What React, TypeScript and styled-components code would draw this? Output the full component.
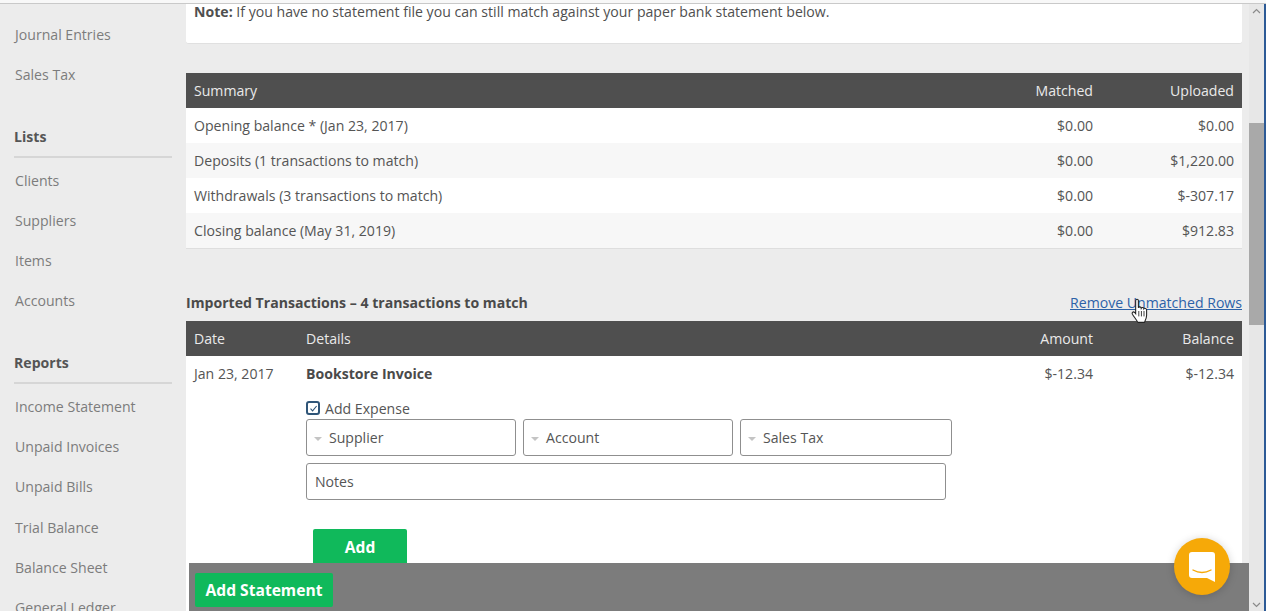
import React from "react";
import styled, { createGlobalStyle } from "styled-components";

const GlobalStyle = createGlobalStyle`
    html, body {
        margin: 0;
        padding: 0;
        background: #ededed;
        overflow: hidden;
    }
    * {
        box-sizing: border-box;
    }
`;

const Page = styled.div`
    position: relative;
    width: 1266px;
    height: 611px;
    overflow: hidden;
    display: flex;
    flex-direction: column;
    background: #ececec;
    font-family: "Open Sans", "Liberation Sans", sans-serif;
    font-size: 14.1px;
    color: #555;
`;

const TopEdge = styled.div`
    height: 4px;
    flex: none;
    background: #f8f8f8;
    border-bottom: 1px solid #c9c9c9;
`;

const Body = styled.div`
    flex: 1;
    display: flex;
    min-height: 0;
    border-right: 2px solid #2c5a96;
`;

const Sidebar = styled.nav`
    width: 186px;
    flex: none;
    overflow: hidden;
    padding: 11px 14px 0 15px;
    display: flex;
    flex-direction: column;
`;

const NavItem = styled.div`
    height: 40.3px;
    flex: none;
    line-height: 40.3px;
    color: #7c7c7c;
    white-space: nowrap;
`;

const NavHeading = styled.div`
    flex: none;
    margin: 21px 0 3px -1px;
    height: 41px;
    line-height: 40px;
    font-weight: 700;
    color: #555;
    border-bottom: 2px solid #d6d6d6;
`;

const Main = styled.main`
    flex: 1;
    min-width: 0;
    padding-right: 7px;
    overflow: hidden;
`;

const NoteCard = styled.div`
    height: 40px;
    padding: 0 8px;
    background: #fff;
    border-radius: 0 0 3px 3px;
    border-bottom: 1px solid #e0e0e0;
    line-height: 16px;
    white-space: nowrap;
    color: #4f4f4f;
`;

const Strong = styled.strong`
    font-weight: 700;
`;

const Table = styled.div<{ $top: number }>`
    margin-top: ${({ $top }) => $top}px;
    background: #fff;
`;

const SummaryTable = styled(Table)`
    border-bottom: 1px solid #dedede;
`;

const HeaderRow = styled.div`
    height: 35px;
    display: flex;
    align-items: center;
    padding: 0 8px;
    background: #4f4f4f;
    color: #eaeaea;
`;

const Row = styled.div<{ $alt?: boolean }>`
    height: 35px;
    display: flex;
    align-items: center;
    padding: 0 8px;
    background: ${({ $alt }) => ($alt ? "#f7f7f7" : "#fff")};
`;

const Grow = styled.div`
    flex: 1;
`;

const NumCell = styled.div<{ $width: number }>`
    width: ${({ $width }) => $width}px;
    text-align: right;
    flex: none;
`;

const DateCell = styled.div`
    width: 112px;
    flex: none;
`;

const TitleBar = styled.div`
    margin-top: 39px;
    height: 28px;
    display: flex;
    align-items: center;
    justify-content: space-between;
`;

const SectionTitle = styled.div`
    font-weight: 700;
    color: #4a4a4a;
`;

const RemoveLink = styled.a`
    color: #2d62a8;
    text-decoration: underline;
`;

const Transaction = styled.div`
    background: #fff;
    height: 260px;
`;

const TxHead = styled.div`
    height: 35px;
    display: flex;
    align-items: center;
    padding: 0 8px;
`;

const TxName = styled.div`
    flex: 1;
    font-weight: 700;
    color: #4a4a4a;
`;

const ExpenseForm = styled.div`
    margin-left: 120px;
    padding-top: 7px;
`;

const CheckLine = styled.label`
    height: 20px;
    display: flex;
    align-items: center;
    gap: 5px;
`;

const CheckBox = styled.span`
    width: 14px;
    height: 14px;
    display: flex;
    align-items: center;
    justify-content: center;
    border: 2px solid #2f5578;
    border-radius: 3px;
`;

const SelectRow = styled.div`
    display: flex;
    gap: 7px;
    margin-top: 1px;
`;

const SelectBox = styled.div<{ $width: number }>`
    width: ${({ $width }) => $width}px;
    height: 37px;
    display: flex;
    align-items: center;
    padding-left: 7px;
    border: 1px solid #8f8f8f;
    border-radius: 3px;
    background: #fff;
`;

const Caret = styled.span`
    width: 0;
    height: 0;
    margin: 2px 7px 0 0;
    border-left: 4px solid transparent;
    border-right: 4px solid transparent;
    border-top: 4px solid #c4c4c4;
`;

const NotesBox = styled.div`
    width: 640px;
    height: 37px;
    margin-top: 7px;
    padding-left: 8px;
    display: flex;
    align-items: center;
    border: 1px solid #8f8f8f;
    border-radius: 3px;
`;

const GreenButton = styled.button`
    border: 0;
    border-radius: 2px;
    background: #10b95b;
    color: #fff;
    font-family: inherit;
    font-weight: 700;
    font-size: 15.6px;
`;

const AddButton = styled(GreenButton)`
    display: block;
    width: 94px;
    height: 36px;
    margin: 29px 0 0 7px;
`;

const ScrollTrack = styled.div`
    width: 15px;
    flex: none;
    position: relative;
    background: #e7e7e7;
`;

const ScrollThumb = styled.div`
    position: absolute;
    top: 119px;
    left: 0;
    width: 100%;
    height: 202px;
    background: #a9a9a9;
`;

const ScrollArrow = styled.svg<{ $end: "top" | "bottom" }>`
    position: absolute;
    left: 3px;
    ${({ $end }) => ($end === "top" ? "top: 4px;" : "bottom: 3px;")}
`;

const BottomBar = styled.div`
    position: absolute;
    left: 189px;
    right: 17px;
    bottom: 0;
    height: 48px;
    padding: 10px 0 0 6px;
    background: #7c7c7c;
`;

const StatementButton = styled(GreenButton)`
    width: 138px;
    height: 34px;
`;

const ChatBubble = styled.div`
    position: absolute;
    left: 1174px;
    top: 538px;
    width: 56px;
    height: 57px;
    display: flex;
    align-items: center;
    justify-content: center;
    border-radius: 50%;
    background: #f6a908;
    box-shadow: 0 1px 8px rgba(0, 0, 0, 0.18);
`;

const CursorIcon = styled.svg`
    position: absolute;
    left: 1130px;
    top: 298px;
`;

const navTop = ["Journal Entries", "Sales Tax"];
const navLists = ["Clients", "Suppliers", "Items", "Accounts"];
const navReports = ["Income Statement", "Unpaid Invoices", "Unpaid Bills", "Trial Balance", "Balance Sheet", "General Ledger"];

const summary = [
    { label: "Opening balance * (Jan 23, 2017)", matched: "$0.00", uploaded: "$0.00" },
    { label: "Deposits (1 transactions to match)", matched: "$0.00", uploaded: "$1,220.00" },
    { label: "Withdrawals (3 transactions to match)", matched: "$0.00", uploaded: "$-307.17" },
    { label: "Closing balance (May 31, 2019)", matched: "$0.00", uploaded: "$912.83" },
];

export default function App() {
    return (
        <Page>
            <GlobalStyle />
            <TopEdge />
            <Body>
                <Sidebar>
                    {navTop.map((n) => <NavItem key={n}>{n}</NavItem>)}
                    <NavHeading>Lists</NavHeading>
                    {navLists.map((n) => <NavItem key={n}>{n}</NavItem>)}
                    <NavHeading>Reports</NavHeading>
                    {navReports.map((n) => <NavItem key={n}>{n}</NavItem>)}
                </Sidebar>
                <Main>
                    <NoteCard>
                        <Strong>Note:</Strong> If you have no statement file you can still match against your paper bank statement below.
                    </NoteCard>
                    <SummaryTable $top={29}>
                        <HeaderRow>
                            <Grow>Summary</Grow>
                            <NumCell $width={120}>Matched</NumCell>
                            <NumCell $width={141}>Uploaded</NumCell>
                        </HeaderRow>
                        {summary.map((s, i) => (
                            <Row key={s.label} $alt={i % 2 === 1}>
                                <Grow>{s.label}</Grow>
                                <NumCell $width={120}>{s.matched}</NumCell>
                                <NumCell $width={141}>{s.uploaded}</NumCell>
                            </Row>
                        ))}
                    </SummaryTable>
                    <TitleBar>
                        <SectionTitle>Imported Transactions – 4 transactions to match</SectionTitle>
                        <RemoveLink>Remove Unmatched Rows</RemoveLink>
                    </TitleBar>
                    <Table $top={5}>
                        <HeaderRow>
                            <DateCell>Date</DateCell>
                            <Grow>Details</Grow>
                            <NumCell $width={120}>Amount</NumCell>
                            <NumCell $width={141}>Balance</NumCell>
                        </HeaderRow>
                        <Transaction>
                            <TxHead>
                                <DateCell>Jan 23, 2017</DateCell>
                                <TxName>Bookstore Invoice</TxName>
                                <NumCell $width={120}>$-12.34</NumCell>
                                <NumCell $width={141}>$-12.34</NumCell>
                            </TxHead>
                            <ExpenseForm>
                                <CheckLine>
                                    <CheckBox>
                                        <svg width="9" height="9" viewBox="0 0 9 9" fill="none">
                                            <path d="M1.5 4.6 L3.6 6.8 L7.6 2" stroke="#2f5578" strokeWidth="1.1" />
                                        </svg>
                                    </CheckBox>
                                    Add Expense
                                </CheckLine>
                                <SelectRow>
                                    <SelectBox $width={210}><Caret />Supplier</SelectBox>
                                    <SelectBox $width={210}><Caret />Account</SelectBox>
                                    <SelectBox $width={212}><Caret />Sales Tax</SelectBox>
                                </SelectRow>
                                <NotesBox>Notes</NotesBox>
                                <AddButton>Add</AddButton>
                            </ExpenseForm>
                        </Transaction>
                    </Table>
                </Main>
                <ScrollTrack>
                    <ScrollThumb />
                    <ScrollArrow $end="top" width="9" height="6" viewBox="0 0 9 6" fill="none">
                        <path d="M1 5 L4.5 1.5 L8 5" stroke="#8a8a8a" strokeWidth="1.2" />
                    </ScrollArrow>
                    <ScrollArrow $end="bottom" width="9" height="6" viewBox="0 0 9 6" fill="none">
                        <path d="M1 1 L4.5 4.5 L8 1" stroke="#8a8a8a" strokeWidth="1.2" />
                    </ScrollArrow>
                </ScrollTrack>
            </Body>
            <BottomBar>
                <StatementButton>Add Statement</StatementButton>
            </BottomBar>
            <ChatBubble>
                <svg width="26" height="30" viewBox="0 0 26 30">
                    <path d="M3 0 H23 A3 3 0 0 1 26 3 V30 L18 26 H3 A3 3 0 0 1 0 23 V3 A3 3 0 0 1 3 0 Z" fill="#fff" />
                    <path d="M4 18 Q13 23 22 18" fill="none" stroke="#f6a908" strokeWidth="1.4" strokeLinecap="round" />
                </svg>
            </ChatBubble>
            <CursorIcon width="20" height="26" viewBox="0 0 17 24">
                <path
                    d="M4.5 2.5 C4.5 0.8 7 0.8 7 2.5 V9 C7.3 7.9 9.4 7.9 9.6 9.4 C10 8.4 12 8.5 12.1 10 C12.6 9.2 14.5 9.4 14.6 11 V16 C14.6 19 13.6 20.5 12.6 22.5 H6.5 C5.5 20.5 3.5 18 1.5 15 C0.5 13.3 2.4 12.2 3.6 13.4 L4.5 14.5 Z"
                    fill="#fff"
                    stroke="#222"
                    strokeWidth="1"
                />
                <path d="M7.4 12 V17 M9.8 12 V17 M12.2 12 V17" stroke="#222" strokeWidth="0.8" />
            </CursorIcon>
        </Page>
    );
}
